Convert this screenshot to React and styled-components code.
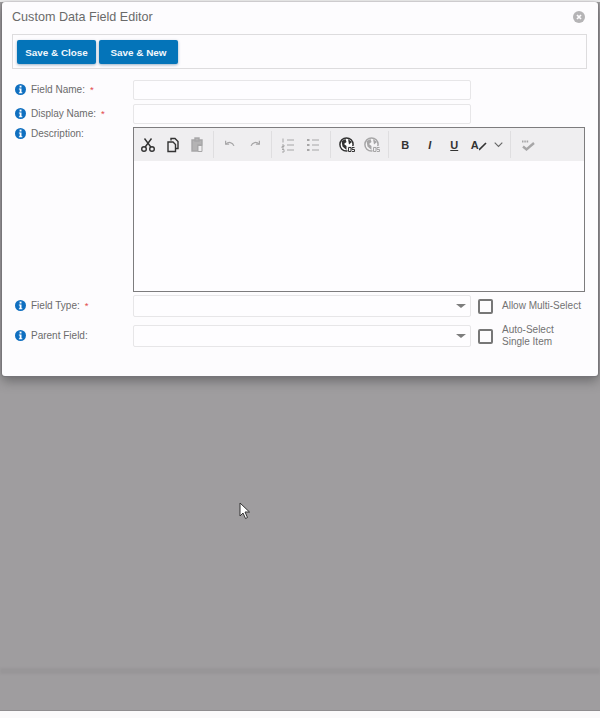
import React from "react";
import styled, { createGlobalStyle } from "styled-components";

const Global = createGlobalStyle`
  html, body { margin: 0; padding: 0; background: #fbfafb; }
  #root { height: 718px; }
  * { box-sizing: border-box; }
`;
const Page = styled.div`
  height: 718px; display: flex; flex-direction: column; overflow: hidden;
  font-family: "Liberation Sans", Arial, sans-serif; color: #666;
`;
const Backdrop = styled.div`
  position: relative; height: 711px; flex: none; background: #9f9d9f;
  padding: 2px 2px 0; border-bottom: 1px solid #8f8d8f;
  background-image: linear-gradient(#ededee 0, #ededee 2px, transparent 2px);
`;
const Modal = styled.div`
  width: 596px; height: 374px; background: #fdfcfe; border-radius: 3px;
  box-shadow: 0 1px 1px #77767a, 0 5px 11px rgba(60,60,62,.5), -1px 0 1px #8a898c, 1px 0 1px #8a898c;
  padding: 0 10px;
`;
const Band = styled.div`
  margin: 292px -2px 0; height: 6px; background: #989698; filter: blur(1px);
`;
const Header = styled.div`
  height: 32px; padding: 0 3px 2px 0; display: flex; align-items: center; justify-content: space-between;
`;
const Title = styled.h1`
  margin: 0; font-size: 12.6px; font-weight: 400; color: #6a6a6a;
`;
const Bar = styled.div`
  height: 35px; width: 575px; border: 1px solid #dddcde; padding: 5px 4px; display: flex; gap: 3px;
`;
const SaveButton = styled.button`
  width: 79px; height: 24px; border: 0; border-radius: 2px; padding: 0; background: #0474b9; color: #f2f8fc;
  font: 700 9.9px "Liberation Sans", Arial, sans-serif; box-shadow: 0 1px 3px rgba(0,60,110,.4);
`;
const Form = styled.div`
  display: flex; flex-direction: column; margin-top: 11px;
`;
const Row = styled.div`
  display: grid; grid-template-columns: 118px 338px auto; align-items: ${p => p.$top ? "start" : "center"};
  padding-left: 3px; margin-top: ${p => p.$gap || 0}px;
`;
const Label = styled.label`
  display: flex; align-items: center; gap: 5px; font-size: 10px; color: #6b6b6b; height: 18px; margin-top: ${p => p.$up ? -3 : -2}px;
  align-self: ${p => p.$up ? "start" : "center"};
`;
const Req = styled.span`
  color: #e24a4a; font-size: 9.5px;
`;
const Input = styled.div`
  height: ${p => p.$h || 20}px; background: #fefdff; border: 1px solid #e7e6e8; border-radius: 2px;
  display: flex; align-items: center; justify-content: flex-end; padding-right: 4px;
`;
const Caret = styled.span`
  width: 0; height: 0; border-left: 5px solid transparent; border-right: 5px solid transparent;
  border-top: 4px solid #7d7d7d;
`;
const Editor = styled.div`
  grid-column: 2 / 4; width: 452px; height: 165px; border: 1px solid #7d7c7e; background: #fefdff;
`;
const EditorBar = styled.div`
  height: 33px; background: #efeef0; display: flex; padding-top: 3px;
`;
const Group = styled.div`
  width: ${p => p.$w}px; height: 27px; flex: none; display: flex; align-items: center; padding-left: ${p => p.$pl}px;
  border-right: ${p => p.$last ? "0" : "1px solid #dfdee0"};
`;
const Tool = styled.span`
  width: ${p => p.$w || 24.5}px; flex: none; height: 24px; display: flex; align-items: center; justify-content: center;
  opacity: ${p => p.$off ? .38 : 1};
`;
const Glyph = styled.span`
  font: ${p => p.$i ? "italic 700" : "700"} 11px "Liberation Sans", Arial, sans-serif; color: #333;
  text-decoration: ${p => p.$u ? "underline" : "none"};
`;
const Side = styled.div`
  display: flex; align-items: center; margin-left: 7px; gap: 9px;
`;
const Check = styled.span`
  width: 15px; height: 15px; flex: none; border: 2px solid #777; border-radius: 2px; background: #fdfcfe;
`;
const SideText = styled.span`
  font-size: 10px; line-height: 12px; color: #727272; white-space: pre-line;
`;
const Cursor = styled.svg`
  position: absolute; left: 239px; top: 502px;
`;
const Footer = styled.div`
  flex: 1; background: #fbfafb;
`;

const Ico = ({ children, s = 16 }) => (
  <svg width={s} height={s} viewBox="0 0 16 16" fill="none" stroke="#333" strokeWidth="1.4">{children}</svg>
);
const Info = () => (
  <svg width="11" height="11" viewBox="0 0 11 11">
    <circle cx="5.5" cy="5.5" r="5.5" fill="#0f6fc0" />
    <rect x="4.6" y="1.6" width="1.9" height="1.9" fill="#fff" />
    <path d="M3.9 4.4h2.6v3.9h.8v1H3.9v-1h.8V5.4h-.8z" fill="#fff" />
  </svg>
);
const Field = ({ children, req }) => (
  <Label><Info />{children}{req && <Req>*</Req>}</Label>
);
const Globe = () => (
  <Ico>
    <circle cx="7.5" cy="7.5" r="6.6" fill="#fff" strokeWidth="1.5" />
    <path d="M2.500 4l4-2 1 3-2.500 2 2.500 2v4L3.500 9.500zM9 2l4 3-3 2.500z" fill="#333" stroke="none" />
    <rect x="8.500" y="9" width="7.500" height="7" fill="#efeef0" stroke="none" />
    <path d="M9.500 10.500h2.500v4H9.500zM15.500 10.500h-2.500v2h2.500v2h-2.500" strokeWidth="1" />
  </Ico>
);

export default function App() {
  return (
    <Page>
      <Global />
      <Backdrop>
        <Modal>
          <Header>
            <Title>Custom Data Field Editor</Title>
            <svg width="12" height="12" viewBox="0 0 12 12">
              <circle cx="6" cy="6" r="6" fill="#b5b4b6" />
              <path d="M4 4l4 4M8 4l-4 4" stroke="#fdfcfe" strokeWidth="1.7" />
            </svg>
          </Header>
          <Bar>
            <SaveButton>Save &amp; Close</SaveButton>
            <SaveButton>Save &amp; New</SaveButton>
          </Bar>
          <Form>
            <Row><Field req>Field Name:</Field><Input /></Row>
            <Row $gap={4}><Field req>Display Name:</Field><Input /></Row>
            <Row $gap={3} $top>
              <Label as="div" $up><Info />Description:</Label>
              <Editor>
                <EditorBar>
                  <Group $w={80} $pl={2}>
                    <Tool><Ico><circle cx="4" cy="12" r="2.300" /><circle cx="12" cy="12" r="2.300" /><path d="M5.200 10L11.500 1.500M10.800 10L4.500 1.500" /></Ico></Tool>
                    <Tool $w={24}><Ico><path d="M6 3.500V1.500h4l3 3v7h-3" /><path d="M3 5h5l2.500 2.500v7H3z" fill="#efeef0" /></Ico></Tool>
                    <Tool $off><Ico><path d="M3 3h10v5H9v6H3z" fill="#555" /><rect x="6" y="1" width="4" height="3" fill="#555" /><path d="M9 8.500h4v6H9z" fill="#efeef0" strokeWidth="1" /></Ico></Tool>
                  </Group>
                  <Group $w={58} $pl={4}>
                    <Tool $off><Ico s={14}><path d="M3 3v4h4" /><path d="M3.500 7C6 4 11 4.500 12.500 9" /></Ico></Tool>
                    <Tool $off><Ico s={14}><path d="M13 3v4H9" /><path d="M12.500 7C10 4 5 4.500 3.500 9" /></Ico></Tool>
                  </Group>
                  <Group $w={59} $pl={4}>
                    <Tool $off><Ico><path d="M7 3h7M7 8h7M7 13h7" strokeWidth="1" /><path d="M3 1.500v4M2 8h2v1.500H2V11h2M2 12.500h2v2.500H2" strokeWidth="1" /></Ico></Tool>
                    <Tool $off><Ico><path d="M7 3h7M7 8h7M7 13h7" strokeWidth="1" /><path d="M2 2h2.500v2H2zM2 7h2.500v2H2zM2 12h2.500v2H2z" fill="#333" stroke="none" /></Ico></Tool>
                  </Group>
                  <Group $w={58} $pl={4}>
                    <Tool><Globe /></Tool>
                    <Tool $off><Globe /></Tool>
                  </Group>
                  <Group $w={122} $pl={4}>
                    <Tool><Glyph>B</Glyph></Tool>
                    <Tool><Glyph $i>I</Glyph></Tool>
                    <Tool><Glyph $u>U</Glyph></Tool>
                    <Tool><Glyph>A</Glyph><svg width="8" height="12" viewBox="0 0 8 12" fill="none" stroke="#333" strokeWidth="1.6"><path d="M0 11L7 4" /></svg></Tool>
                    <Tool $w={14}><svg width="9" height="6" viewBox="0 0 9 6" fill="none" stroke="#666" strokeWidth="1.1"><path d="M.7.700L4.500 4.500 8.300.700" /></svg></Tool>
                  </Group>
                  <Group $w={40} $pl={5} $last>
                    <Tool $off><svg width="16" height="16" viewBox="0 0 16 16" fill="none" stroke="#333"><path d="M2 4.500h7" strokeWidth="2.200" strokeDasharray="1.500 .8" /><path d="M3 9.500l3.500 3L14 6" strokeWidth="2.400" /></svg></Tool>
                  </Group>
                </EditorBar>
              </Editor>
            </Row>
            <Row $gap={3}>
              <Field req>Field Type:</Field>
              <Input $h={22}><Caret /></Input>
              <Side><Check /><SideText>Allow Multi-Select</SideText></Side>
            </Row>
            <Row $gap={7}>
              <Field>Parent Field:</Field>
              <Input $h={22}><Caret /></Input>
              <Side><Check /><SideText>{"Auto-Select\nSingle Item"}</SideText></Side>
            </Row>
          </Form>
        </Modal>
        <Band />
        <Cursor width="12" height="18" viewBox="0 0 12 18">
          <path d="M1 1v13l3-3 2.500 5.500 2-1L6 10h4.500z" fill="#fff" stroke="#333" strokeWidth="1" />
        </Cursor>
      </Backdrop>
      <Footer />
    </Page>
  );
}
